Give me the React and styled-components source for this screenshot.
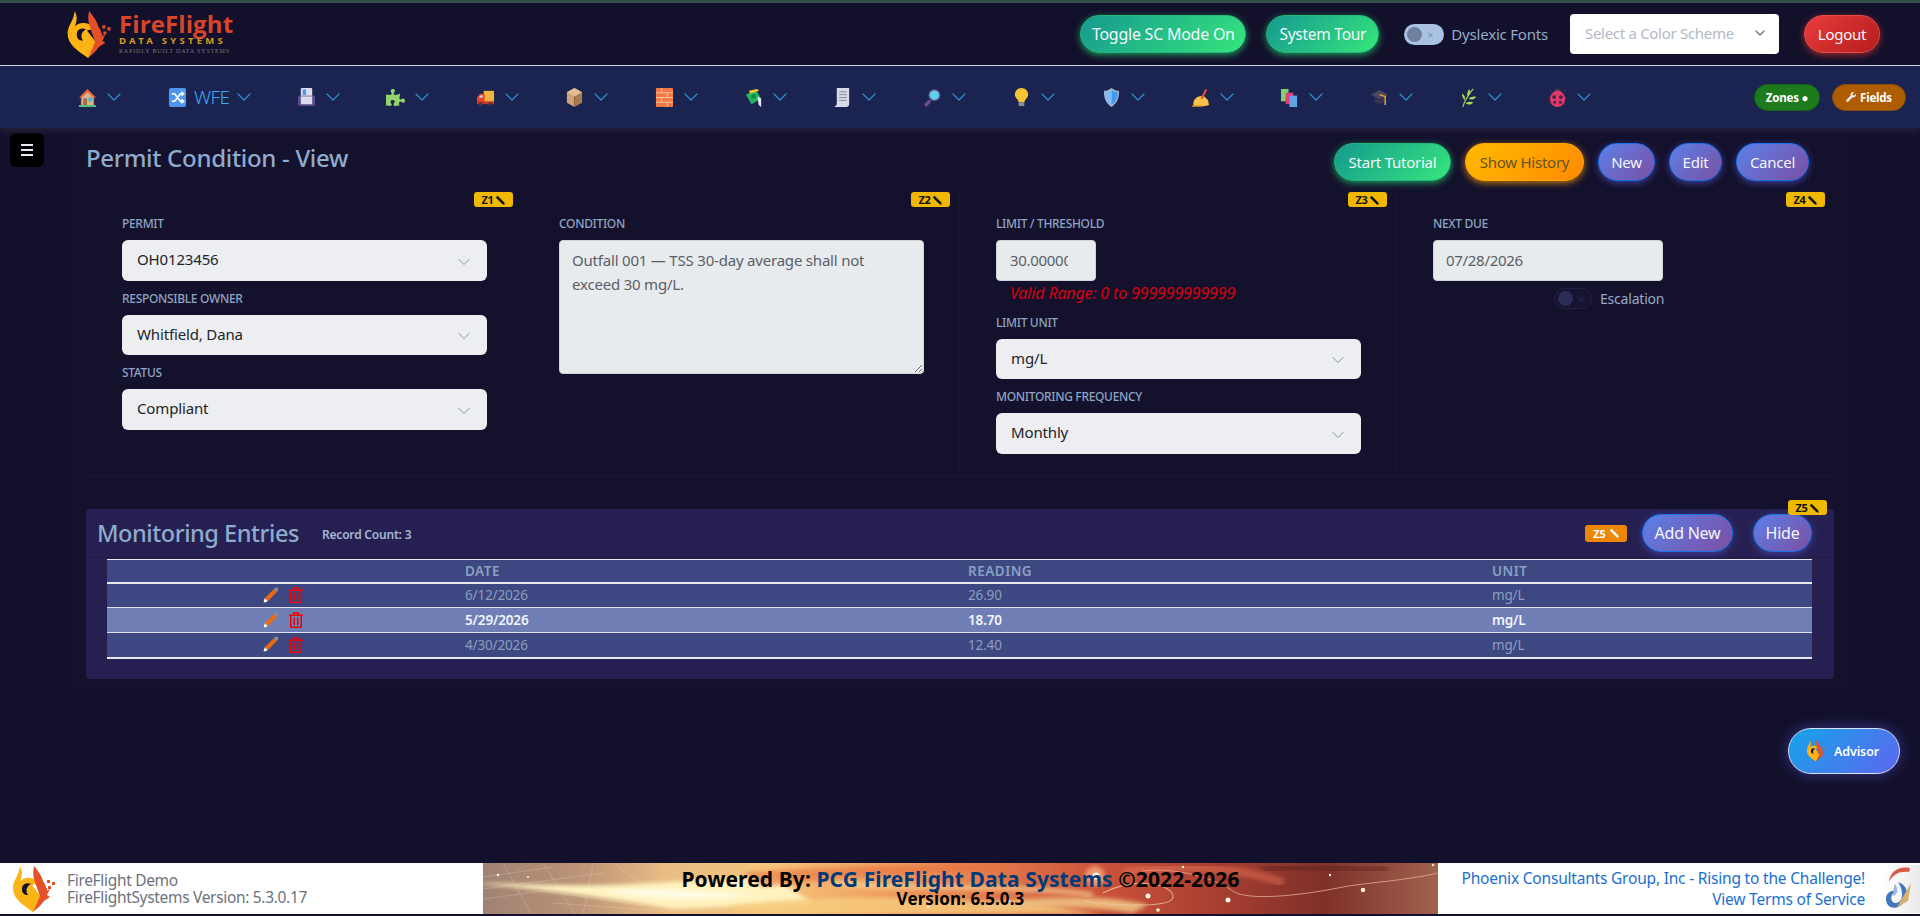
import React from 'react';
import styled, { createGlobalStyle } from 'styled-components';
import { ChevronDown } from 'lucide-react';
import { FaPuzzlePiece, FaRegTrashAlt, FaWrench } from 'react-icons/fa';

const GlobalStyle = createGlobalStyle`
	html, body { margin: 0; padding: 0; height: 100%; background: #13102b; overflow: hidden; }
	body { font-family: "Noto Sans", "Open Sans", sans-serif; font-size: 14px; }
	#root { height: 916px; }
	* { box-sizing: border-box; }
`;

const Page = styled.div`
	height: 916px;
	display: flex;
	flex-direction: column;
	background: #13102b;
	border-top: 3px solid #32504c;
	position: relative;
	overflow: hidden;
`;

/* header */
const Header = styled.header`
	height: 63px;
	flex: none;
	display: flex;
	align-items: center;
	padding: 0 40px 0 63px;
	border-bottom: 1px solid #d8dce6;
	background: #13102b;
`;
const LogoBlock = styled.div`
	display: flex;
	align-items: center;
	gap: 8px;
	margin-right: auto;
`;
const LogoText = styled.div`
	display: flex;
	flex-direction: column;
	width: 116px;
`;
const LogoName = styled.span`
	font: 700 24px/23px "Open Sans", sans-serif;
	color: #d8452a;
	letter-spacing: 0.1px;
`;
const LogoSub = styled.span`
	font: 700 9.5px/12px "Noto Sans", sans-serif;
	color: #d39a1d;
	letter-spacing: 3.25px;
	white-space: nowrap;
`;
const LogoTag = styled.span`
	font: 400 6px/9px "Liberation Serif", serif;
	color: #77757f;
	letter-spacing: 0.85px;
	white-space: nowrap;
`;
const HeaderActions = styled.div`
	display: flex;
	align-items: center;
`;
const gradients = {
	green: 'linear-gradient(135deg, #15998f, #36e67c)',
	orange: 'linear-gradient(135deg, #ffbb00, #ff8a00)',
	purple: 'linear-gradient(135deg, #5b80e8, #7c4fa3)',
	red: 'linear-gradient(135deg, #ea3c3c, #b31d1d)',
};
const glow = {
	green: '#1d9a5a',
	orange: '#b97a10',
	purple: '#3f3f9a',
	red: '#9c2a2a',
};
const edge = {
	green: '#22b57a',
	orange: '#ffa600',
	purple: '#1673ea',
	red: '#e74a4a',
};
const Pill = styled.button`
	height: 38px;
	width: ${p => p.$w}px;
	margin-left: ${p => p.$ml || 0}px;
	padding: 0;
	flex: none;
	border-radius: 19px;
	border: 1px solid ${p => edge[p.$kind]};
	background: ${p => gradients[p.$kind]};
	box-shadow: 0 2px 7px ${p => glow[p.$kind]};
	color: ${p => (p.$kind === 'orange' ? '#6a5320' : '#f3f6fb')};
	font: 400 ${p => p.$fs || 15}px/20px "Noto Sans", sans-serif;
	letter-spacing: -0.25px;
	white-space: nowrap;
`;
const ToggleTrack = styled.span`
	width: ${p => p.$w}px;
	height: 21px;
	margin-left: ${p => p.$ml || 0}px;
	flex: none;
	border-radius: 11px;
	display: flex;
	align-items: center;
	padding-left: 3px;
	background: ${p => (p.$dark ? '#171431' : '#a9c1e3')};
	border: ${p => (p.$dark ? '1px solid #232044' : 'none')};
	color: ${p => (p.$dark ? '#2c2a52' : '#7f90ad')};
	font-size: 11px;
`;
const ToggleKnob = styled.span`
	width: 15px;
	height: 15px;
	border-radius: 50%;
	margin-right: 5px;
	background: ${p => (p.$dark ? '#2b2c57' : '#6f7f9e')};
`;
const ToggleLabel = styled.span`
	margin-left: ${p => p.$ml}px;
	color: #96a9c5;
	font-size: ${p => p.$fs || 14}px;
	letter-spacing: -0.2px;
	white-space: nowrap;
`;
const SchemeSelect = styled.div`
	width: 209px;
	height: 40px;
	margin-left: 22px;
	background: #fff;
	border-radius: 4px;
	display: flex;
	align-items: center;
	padding: 0 11px 3px 15px;
	justify-content: space-between;
	color: #b3b9c4;
	font-size: 15px;
	letter-spacing: -0.3px;
	white-space: nowrap;
`;

/* nav */
const Nav = styled.nav`
	height: 62px;
	flex: none;
	display: flex;
	align-items: center;
	padding: 0 14px 0 78px;
	background: #1b2350;
	box-shadow: 0 3px 6px rgba(70, 70, 90, 0.35);
	position: relative;
	z-index: 2;
`;
const NavItem = styled.div`
	width: ${p => p.$w}px;
	flex: none;
	display: flex;
	align-items: center;
	color: #39a9ee;
	font-size: 19px;
	svg.glyph { flex: none; width: 19px; height: 19px; }
	svg.chev { flex: none; margin-left: 5px; color: #2f8fd0; }
`;
const NavLabel = styled.span`
	margin-left: 7px;
	margin-right: -2px;
	letter-spacing: -0.6px;
	font-weight: 300;
`;
const NavPills = styled.div`
	margin-left: auto;
	display: flex;
	gap: 12px;
`;
const NavPill = styled.span`
	height: 27px;
	width: ${p => p.$w}px;
	border-radius: 14px;
	display: flex;
	align-items: center;
	justify-content: center;
	gap: 4px;
	background: ${p => p.$bg};
	border: 1px solid ${p => p.$line};
	color: #fff;
	font: 700 11.5px "Noto Sans", sans-serif;
	letter-spacing: -0.2px;
`;

/* main */
const Main = styled.main`
	flex: 1;
	min-height: 0;
	padding: 9px 75px 0;
`;
const MenuButton = styled.div`
	position: absolute;
	left: 10px;
	top: 130px;
	width: 34px;
	height: 34px;
	background: #000;
	border-radius: 6px;
	display: flex;
	flex-direction: column;
	align-items: center;
	justify-content: center;
	gap: 3px;
	span { display: block; width: 12px; height: 2px; background: #e6e9f2; }
`;
const Card = styled.section`
	height: 551px;
	padding: 0 11px;
	background: #14112d;
	border-radius: 4px;
	box-shadow: 0 0 3px rgba(40, 36, 80, 0.6);
`;
const TitleRow = styled.div`
	height: 50px;
	display: flex;
	align-items: flex-start;
	padding: 6px 25px 0 0;
`;
const PageTitle = styled.h1`
	margin: 0 auto 0 0;
	font: 500 24px/30px "Noto Sans", sans-serif;
	letter-spacing: -0.3px;
	color: #8fabcd;
	white-space: nowrap;
`;
const Zones = styled.div`
	height: 289px;
	display: grid;
	grid-template-columns: repeat(4, 1fr);
	border-radius: 4px;
	box-shadow: 0 1px 0 #1a1737;
`;
const Zone = styled.div`
	position: relative;
	padding: 29px 35px 0 36px;
	border-right: ${p => (p.$last ? 'none' : '1px solid #19163a')};
`;
const ZoneBadge = styled.span`
	position: absolute;
	right: ${p => p.$r ?? 9}px;
	top: ${p => p.$t ?? 5}px;
	width: 39px;
	height: 15px;
	display: flex;
	align-items: center;
	justify-content: center;
	gap: 2px;
	background: #f0b800;
	border-radius: 3px;
	color: #111;
	font: 700 11px/15px "Noto Sans", sans-serif;
	letter-spacing: -0.4px;
`;
const Field = styled.div`
	margin-bottom: 10px;
`;
const FieldLabel = styled.label`
	display: block;
	height: 16px;
	margin-bottom: 8px;
	font: 500 12px/16px "Noto Sans", sans-serif;
	letter-spacing: -0.32px;
	color: #8fa3c2;
	text-transform: uppercase;
	white-space: nowrap;
`;
const SelectBox = styled.div`
	height: 40.5px;
	background: #eceef2;
	border-radius: 6px;
	display: flex;
	align-items: center;
	justify-content: space-between;
	padding: 0 13px 2px 15px;
	color: #212529;
	font-size: 15px;
	letter-spacing: -0.15px;
	svg { color: #7d8796; margin-top: 5px; }
`;
const TextArea = styled.textarea`
	display: block;
	width: 100%;
	height: 134px;
	padding: 7px 12px;
	border: 1px solid #cfd4da;
	border-radius: 4px;
	background: #e8ebee;
	color: #596067;
	font: 400 15px/24px "Noto Sans", sans-serif;
	letter-spacing: -0.2px;
	outline: none;
`;
const TextInput = styled.input`
	display: block;
	width: ${p => p.$w}px;
	height: 41px;
	padding: ${p => p.$pad};
	border: 1px solid #cfd4da;
	border-radius: 4px;
	background: #e8ebee;
	color: #596067;
	font: 400 15px "Noto Sans", sans-serif;
	letter-spacing: -0.3px;
	outline: none;
`;
const RangeNote = styled.div`
	height: 20px;
	margin: 2px 0 11.5px 14px;
	color: #d8000c;
	font: italic 400 16px/20px "Noto Sans", sans-serif;
	letter-spacing: -0.15px;
	white-space: nowrap;
`;
const ToggleRow = styled.div`
	display: flex;
	align-items: center;
	margin: 7px 0 0 121px;
`;

const Entries = styled.section`
	height: 170px;
	margin-top: 33px;
	background: #262052;
	border-radius: 4px;
	position: relative;
`;
const EntriesHead = styled.div`
	height: 49px;
	display: flex;
	align-items: center;
	padding: 0 22px 0 11px;
	border-bottom: 1px solid #1f1a47;
`;
const EntriesTitle = styled.h2`
	margin: 0;
	font: 500 23.5px/30px "Noto Sans", sans-serif;
	letter-spacing: -0.45px;
	color: #8fabcd;
	white-space: nowrap;
`;
const RecordCount = styled.span`
	margin: 2px auto 0 23px;
	color: #a5b6d2;
	font: 600 12px "Noto Sans", sans-serif;
	letter-spacing: -0.2px;
`;
const InlineBadge = styled.span`
	width: 42px;
	height: 17px;
	margin-right: 15px;
	display: flex;
	align-items: center;
	justify-content: center;
	gap: 3px;
	background: #ee8606;
	border-radius: 3px;
	color: #fff;
	font: 700 11px "Noto Sans", sans-serif;
`;
const Table = styled.table`
	width: 1705px;
	margin: 1px 0 0 21px;
	border-collapse: collapse;
	table-layout: fixed;
	background: #3d4883;
	border-top: 1px solid #e6e8ee;
	border-bottom: 2px solid #e6e8ee;
`;
const HeadCell = styled.th`
	height: 23px;
	padding: 0;
	text-align: left;
	color: #8ba0c2;
	font: 600 13.5px "Noto Sans", sans-serif;
	letter-spacing: 0.5px;
	border-bottom: 2px solid #e6e8ee;
`;
const Row = styled.tr`
	background: ${p => (p.$active ? '#6f7fb5' : '#3d4883')};
	color: ${p => (p.$active ? '#f2f5fc' : '#8c9dbd')};
	font-weight: ${p => (p.$active ? 600 : 400)};
	&:not(:last-child) td { border-bottom: 1px solid #dfe2ea; }
`;
const Cell = styled.td`
	height: 25px;
	padding: 0;
	font-size: 13.5px;
	letter-spacing: -0.15px;
`;
const RowIcons = styled.div`
	display: flex;
	align-items: center;
	gap: 9px;
	padding-left: 155px;
	color: #f00000;
`;
const AdvisorButton = styled.button`
	position: absolute;
	left: 1788px;
	top: 725px;
	width: 112px;
	height: 46px;
	display: flex;
	align-items: center;
	justify-content: center;
	gap: 8px;
	border: 1px solid #d7def5;
	border-radius: 23px;
	background: linear-gradient(135deg, #14a4e8, #5f66f0);
	box-shadow: 0 0 14px rgba(84, 88, 220, 0.55);
	color: #fff;
	font: 600 12.5px "Noto Sans", sans-serif;
	letter-spacing: -0.1px;
	padding: 0 4px 0 0;
`;

/* footer */
const Footer = styled.footer`
	height: 51px;
	flex: none;
	margin-bottom: 2px;
	display: flex;
	align-items: center;
	background: #fff;
`;
const FooterLeft = styled.div`
	width: 483px;
	flex: none;
	display: flex;
	align-items: center;
	padding-left: 8px;
`;
const FooterApp = styled.div`
	margin-left: 11px;
	color: #6b737c;
	font-size: 15.5px;
	line-height: 17px;
	letter-spacing: -0.32px;
	white-space: nowrap;
`;
const Banner = styled.div`
	width: 955px;
	height: 100%;
	flex: none;
	position: relative;
	display: flex;
	flex-direction: column;
	align-items: center;
	padding: 3px 0 0 0;
	overflow: hidden;
	> svg { position: absolute; left: 0; top: 0; }
`;
const PoweredBy = styled.div`
	position: relative;
	color: #000;
	font: 700 21px/26px "Noto Sans", sans-serif;
	letter-spacing: 0.1px;
	white-space: nowrap;
	span { color: #003b78; }
`;
const BannerVersion = styled.div`
	position: relative;
	margin-top: -3px;
	color: #000;
	font: 700 17px/20px "Noto Sans", sans-serif;
	letter-spacing: 0.1px;
`;
const FooterRight = styled.div`
	flex: 1;
	display: flex;
	align-items: center;
	justify-content: flex-end;
`;
const FooterLinks = styled.div`
	display: flex;
	flex-direction: column;
	align-items: flex-end;
	color: #1a6fd0;
	font-size: 15.5px;
	line-height: 21px;
	letter-spacing: -0.2px;
	white-space: nowrap;
`;
const SwirlBox = styled.div`
	width: 36px;
	margin-left: 19px;
	display: flex;
	background: linear-gradient(90deg, #fff 0%, #e9e9e9 100%);
`;

/* drawings */
const Phoenix = ({ w, h }) => (
	<svg width={w} height={h} viewBox="0 0 46 48">
		<path d="M24 47 C14 40 4 34 4 23 C4 15 10 11 11 1 C14 7 13 12 11 16 C14 13 18 12 22 13 C26 13 28 17 29 21 C27 19 25 19 23 20 C26 24 30 29 32 32 C30 37 27 43 24 47Z" fill="#fbb316" />
		<path d="M13 24 C13 19 18 17 22 19 C18 21 16 25 19 30 C15 30 13 28 13 24Z" fill="#13102b" />
		<path d="M24 47 C27 41 29 36 31 31 C29 26 27 20 25 14 C24 9 24 6 25 1 C29 6 33 11 34 16 C36 19 38 22 37 26 L41 24 L38 30 L41 32 L35 36 C32 40 28 44 24 47Z" fill="#e5502a" />
		<path d="M38 15h3v3h-3zM43 17h3v3h-3zM39 21h3v3h-3zM35 23h3v3h-3z" fill="#e5502a" />
	</svg>
);
const Swirl = () => (
	<svg width="28" height="48" viewBox="0 0 28 48">
		<path d="M26 3 C14 1 6 7 5 17 C9 9 16 6 25 7Z" fill="#d55a4a" />
		<path d="M14 17 C24 20 25 30 20 37 C14 46 2 44 2 34 C2 27 9 24 14 27 C8 27 6 32 8 36 C12 41 19 36 18 29 C18 24 16 20 14 17Z" fill="#3f78bd" />
		<path d="M27 18 L24 36 L13 42 L20 30Z" fill="#d8b070" />
		<path d="M11 19 C15 24 13 30 9 31 C10 27 9 22 11 19Z" fill="#9bb9dc" />
	</svg>
);
const sparks = [[700, 4, 1.2], [613, 13, 3.5], [665, 33, 2.5], [745, 37, 2.5], [847, 12, 1.2], [880, 27, 2.2], [675, 47, 1.8], [525, 38, 2], [445, 44, 1.2], [15, 12, 1.2], [45, 14, 1], [950, 2, 1.2]];
const BannerArt = () => (
	<svg width="955" height="51" viewBox="0 0 955 51" preserveAspectRatio="none">
		<defs>
			<linearGradient id="bannerBase" x1="0" x2="1" y1="0" y2="0">
				<stop offset="0" stopColor="#a08273" />
				<stop offset="0.1" stopColor="#bb9377" />
				<stop offset="0.19" stopColor="#e8bc84" />
				<stop offset="0.3" stopColor="#f6c67c" />
				<stop offset="0.42" stopColor="#ef9f60" />
				<stop offset="0.54" stopColor="#e2774a" />
				<stop offset="0.65" stopColor="#c9523a" />
				<stop offset="0.76" stopColor="#ab4032" />
				<stop offset="0.88" stopColor="#7f3029" />
				<stop offset="1" stopColor="#a0624f" />
			</linearGradient>
			<filter id="soft"><feGaussianBlur stdDeviation="2.2" /></filter>
		</defs>
		<rect width="955" height="51" fill="url(#bannerBase)" />
		<g stroke="#e9dccb" strokeWidth="0.7" opacity="0.4" fill="none">
			<path d="M0 14 L70 4 M0 36 L60 28 L160 42 M20 0 L48 51 M60 0 L92 51 M110 2 L100 51 M0 26 L120 10 M130 0 L160 22 M70 40 L180 48" />
		</g>
		<path d="M0 20 C60 22 110 24 170 20 L290 14 L330 40 L190 46 C130 36 70 28 0 21Z" fill="#fff3c0" filter="url(#soft)" />
		<path d="M120 28 C170 24 220 28 270 32 C220 38 170 36 120 29Z" fill="#fffbe6" filter="url(#soft)" />
		<path d="M260 10 C340 2 430 4 520 0 L520 6 C430 12 350 14 280 24Z" fill="#e8703e" opacity="0.6" filter="url(#soft)" />
		<path d="M240 44 C330 30 440 34 560 42 L620 51 H300Z" fill="#f7cd7e" opacity="0.8" filter="url(#soft)" />
		<path d="M350 20 C430 28 520 20 610 32" stroke="#f9d598" strokeWidth="5" fill="none" opacity="0.7" filter="url(#soft)" />
		<path d="M500 40 C560 34 620 30 665 42 L650 50 C600 42 550 44 500 46Z" fill="#f0c683" opacity="0.85" filter="url(#soft)" />
		<path d="M660 8 C690 4 730 14 750 28 C760 36 800 36 860 24 C880 20 920 18 955 10" stroke="#e9b49b" strokeWidth="1" fill="none" opacity="0.75" />
		<path d="M620 30 C650 14 690 20 690 34 C690 44 640 44 600 38" stroke="#f0c7a6" strokeWidth="1.1" fill="none" opacity="0.75" />
		<path d="M780 6 C830 0 870 10 905 6" stroke="#5c231f" strokeWidth="8" fill="none" opacity="0.5" filter="url(#soft)" />
		<path d="M640 10 C680 0 760 4 800 20" stroke="#ef7a5a" strokeWidth="8" fill="none" opacity="0.45" filter="url(#soft)" />
		<circle cx="612" cy="13" r="10" fill="#ffb48a" opacity="0.7" filter="url(#soft)" />
		{sparks.map(([x, y, r]) => <circle key={x} cx={x} cy={y} r={r} fill="#fff6e4" />)}
	</svg>
);
const ZonePencil = ({ color = '#111', s = 10 }) => (
	<svg width={s} height={s} viewBox="0 0 10 10">
		<path d="M.8 2.6 L2.6 .8 L9.3 7.5 L9.7 9.7 L7.5 9.3Z" fill={color} />
	</svg>
);
const EditPencil = () => (
	<svg width="17" height="17" viewBox="0 0 16 16">
		<path d="M2.6 10.6 L11.3 1.9 L14 4.6 L5.4 13.4Z" fill="#ea6a12" />
		<path d="M11.3 1.9 L12.7 .8 C13.3 .4 14 .5 14.6 1 C15.3 1.7 15.4 2.5 15 3.3 L14 4.6Z" fill="#8d9291" />
		<path d="M2.6 10.6 L5.4 13.4 L1.2 15Z" fill="#fff" />
		<path d="M1.6 13.9 L2.3 14.6 L1 15.2Z" fill="#1b2350" />
	</svg>
);

const Glyph = ({ children }) => (
	<svg className="glyph" viewBox="0 0 20 20">{children}</svg>
);
const icons = {
	home: <Glyph><path d="M10 1 L19 10 H17 V18 H3 V10 H1Z" fill="#e4683d" /><path d="M4 10 L10 4.5 L16 10 V18 H4Z" fill="#d9b48c" /><rect x="11" y="10" width="4" height="4" fill="#3fb4e8" /><rect x="5.5" y="11" width="4" height="7" fill="#a86a43" /><rect x="1" y="18" width="18" height="2" fill="#58c77a" /></Glyph>,
	shuffle: <Glyph><rect x="1" y="0" width="18" height="20" rx="2" fill="#4f97ee" /><path d="M4 6 H7 L13 14 H16 M4 14 H7 L13 6 H16 M14 4 L16.5 6 L14 8 M14 12 L16.5 14 L14 16" stroke="#fff" strokeWidth="1.6" fill="none" /></Glyph>,
	cabinet: <Glyph><rect x="1" y="8" width="18" height="11" rx="2" fill="#5b4a8c" /><rect x="4" y="0" width="12" height="17" rx="1" fill="#dcdcf0" /><rect x="6" y="1.5" width="3.5" height="6" fill="#4f97ee" /><rect x="4" y="8" width="12" height="1" fill="#7f7fa8" /></Glyph>,
	truck: <Glyph><rect x="8" y="3" width="11" height="12" fill="#f0b53c" /><path d="M1 16 V10 L4 6 H9 V16Z" fill="#e8432f" /><path d="M3 10 L5 7.5 H7 V10Z" fill="#bfe7f5" /><rect x="1" y="14" width="18" height="3" fill="#c9342a" /><circle cx="5" cy="17" r="2" fill="#3a3a44" /><circle cx="15" cy="17" r="2" fill="#3a3a44" /></Glyph>,
	box: <Glyph><path d="M10 0 L18 4.5 V15.5 L10 20Z" fill="#a97a52" /><path d="M10 0 L2 4.5 V15.5 L10 20Z" fill="#cfa27a" /><path d="M2 4.5 L10 9 L18 4.5 L10 0Z" fill="#e2bd96" /><path d="M10 9 V20" stroke="#8c6240" /></Glyph>,
	brick: <Glyph><rect x="1" y="0" width="18" height="20" rx="1" fill="#ef7a44" /><path d="M1 5 H19 M1 10 H19 M1 15 H19 M7 0 V5 M13 5 V10 M7 10 V15 M13 15 V20" stroke="#f7c4a8" strokeWidth="1" /></Glyph>,
	money: <Glyph><path d="M2 7 L12 1 L18 11 L8 17Z" fill="#22b45a" /><circle cx="10" cy="9" r="2.4" fill="#138a41" /><path d="M5 3 L14 1 L16 3 L7 6Z" fill="#f2c230" /><path d="M14 9 L18 11 L18 20 L15.5 18Z" fill="#e8e8f0" /></Glyph>,
	scroll: <Glyph><path d="M4 0 H17 V17 C17 19 15 20 13 20 H1 C3 19 4 18 4 16Z" fill="#d9d9e8" /><path d="M6.5 4 H14.5 M6.5 7 H14.5 M6.5 10 H14.5 M6.5 13 H14.5" stroke="#8a8aa0" strokeWidth="1" /></Glyph>,
	magnifier: <Glyph><rect x="1" y="14" width="8" height="3.6" rx="1.6" transform="rotate(-45 5 16)" fill="#6f4a8c" /><circle cx="12" cy="7.5" r="6.5" fill="#5d4a82" /><circle cx="12" cy="7.5" r="5" fill="#5fd0ec" /></Glyph>,
	bulb: <Glyph><path d="M10 0 C14 0 17 3 17 7 C17 10 14 11 13 15 H7 C6 11 3 10 3 7 C3 3 6 0 10 0Z" fill="#f7c436" /><rect x="7" y="15" width="6" height="4" rx="1" fill="#8d8da0" /></Glyph>,
	shield: <Glyph><path d="M10 0 C13 2 15 3 18 3 C18 11 16 16 10 20 C4 16 2 11 2 3 C5 3 7 2 10 0Z" fill="#a8b4c8" /><path d="M10 2 C12.5 3.5 14 4.2 16.5 4.4 C16.5 11 14.5 15 10 18Z" fill="#3f9cf2" /><path d="M10 2 C7.5 3.5 6 4.2 3.5 4.4 C3.5 11 5.5 15 10 18Z" fill="#7fbcf5" /></Glyph>,
	write: <Glyph><path d="M3 19 C1 14 5 10 8 9 L13 8 L18 13 L19 18 L15 19Z" fill="#f8c24a" /><path d="M10 11 L15 1 L17 2 L12 12Z" fill="#e2503c" /><path d="M1 19 H13" stroke="#e89020" strokeWidth="1.5" /></Glyph>,
	books: <Glyph><rect x="1" y="1" width="8" height="13" fill="#7fd06e" /><rect x="6" y="5" width="8" height="12" fill="#e23d78" /><rect x="10" y="8" width="8" height="12" fill="#5fa4e8" /></Glyph>,
	cap: <Glyph><path d="M10 2 L19 7 L10 12 L1 7Z" fill="#4a4660" /><path d="M5 10 V15 C7 17 13 17 15 15 V10 L10 13Z" fill="#3a3650" /><path d="M10 7 L16 9 V18" stroke="#ee9a2e" strokeWidth="1.6" fill="none" /></Glyph>,
	leaf: <Glyph><path d="M4 20 C6 13 10 7 15 1" stroke="#9bd24e" strokeWidth="1.3" fill="none" /><path d="M9 9 C8 6 9 3 11 1 C12 4 12 7 9 9Z M6 13 C4 11 3 8 3 6 C6 7 7 10 6 13Z M10 11 C13 9 16 9 18 9 C17 12 13 13 10 11Z M7 16 C10 14 13 14 15 15 C13 18 10 18 7 16Z" fill="#a5d84f" /></Glyph>,
	bug: <Glyph><path d="M4 4 L1 1 M16 4 L19 1 M2 10 H0 M18 10 H20 M3 16 L1 18 M17 16 L19 18" stroke="#4a3a50" strokeWidth="1" /><circle cx="10" cy="4" r="3.5" fill="#4a3a50" /><ellipse cx="10" cy="11.5" rx="8" ry="8.5" fill="#e0386a" /><circle cx="6.5" cy="9.5" r="2" fill="#3a2a40" /><circle cx="13.5" cy="9.5" r="2" fill="#3a2a40" /><circle cx="7" cy="15" r="1.6" fill="#3a2a40" /><circle cx="13" cy="15" r="1.6" fill="#3a2a40" /></Glyph>,
};
const navIcons = ['cabinet', 'puzzle', 'truck', 'box', 'brick', 'money', 'scroll', 'magnifier', 'bulb', 'shield', 'write', 'books', 'cap', 'leaf', 'bug'];

const entries = [
	{ date: '6/12/2026', reading: '26.90', unit: 'mg/L' },
	{ date: '5/29/2026', reading: '18.70', unit: 'mg/L', active: true },
	{ date: '4/30/2026', reading: '12.40', unit: 'mg/L' },
];

const Select = ({ label, value }) => (
	<Field>
		<FieldLabel>{label}</FieldLabel>
		<SelectBox>{value}<ChevronDown size={20} strokeWidth={1.1} /></SelectBox>
	</Field>
);
const Badge = ({ children, ...rest }) => (
	<ZoneBadge {...rest}>{children}<ZonePencil /></ZoneBadge>
);

export default function App() {
	return (
		<Page>
			<GlobalStyle />
			<Header>
				<LogoBlock>
					<Phoenix w={48} h={49} />
					<LogoText>
						<LogoName>FireFlight</LogoName>
						<LogoSub>DATA SYSTEMS</LogoSub>
						<LogoTag>RAPIDLY BUILT DATA SYSTEMS</LogoTag>
					</LogoText>
				</LogoBlock>
				<HeaderActions>
					<Pill $kind="green" $w={166} $fs={16}>Toggle SC Mode On</Pill>
					<Pill $kind="green" $w={113} $ml={20} $fs={15.5}>System Tour</Pill>
					<ToggleTrack $w={40} $ml={25}><ToggleKnob />×</ToggleTrack>
					<ToggleLabel $ml={7} $fs={15}>Dyslexic Fonts</ToggleLabel>
					<SchemeSelect>Select a Color Scheme<ChevronDown size={16} color="#6c757d" /></SchemeSelect>
					<Pill $kind="red" $w={76} $ml={25}>Logout</Pill>
				</HeaderActions>
			</Header>
			<Nav>
				<NavItem $w={90}>{icons.home}<ChevronDown className="chev" size={24} strokeWidth={1.2} /></NavItem>
				<NavItem $w={129}>{icons.shuffle}<NavLabel>WFE</NavLabel><ChevronDown className="chev" size={24} strokeWidth={1.2} /></NavItem>
				{navIcons.map(name => (
					<NavItem key={name} $w={89.4}>
						{name === 'puzzle' ? <FaPuzzlePiece className="glyph" color="#93d36c" /> : icons[name]}
						<ChevronDown className="chev" size={24} strokeWidth={1.2} />
					</NavItem>
				))}
				<NavPills>
					<NavPill $w={66} $bg="#1d7a1d" $line="#166316">Zones ●</NavPill>
					<NavPill $w={74} $bg="#ad5c00" $line="#8a4c0c"><FaWrench size={10} color="#e8e8e8" /> Fields</NavPill>
				</NavPills>
			</Nav>
			<MenuButton><span /><span /><span /></MenuButton>
			<Main>
				<Card>
					<TitleRow>
						<PageTitle>Permit Condition - View</PageTitle>
						<Pill $kind="green" $w={117}>Start Tutorial</Pill>
						<Pill $kind="orange" $w={119} $ml={14}>Show History</Pill>
						<Pill $kind="purple" $w={57} $ml={14}>New</Pill>
						<Pill $kind="purple" $w={53} $ml={14}>Edit</Pill>
						<Pill $kind="purple" $w={73} $ml={14}>Cancel</Pill>
					</TitleRow>
					<Zones>
						<Zone>
							<Badge>Z1</Badge>
							<Select label="Permit" value="OH0123456" />
							<Select label="Responsible Owner" value="Whitfield, Dana" />
							<Select label="Status" value="Compliant" />
						</Zone>
						<Zone>
							<Badge>Z2</Badge>
							<Field>
								<FieldLabel>Condition</FieldLabel>
								<TextArea readOnly value="Outfall 001 — TSS 30-day average shall not exceed 30 mg/L." />
							</Field>
						</Zone>
						<Zone>
							<Badge>Z3</Badge>
							<FieldLabel>Limit / Threshold</FieldLabel>
							<TextInput readOnly $w={100} $pad="0 27px 1px 13px" value="30.000000" />
							<RangeNote>Valid Range: 0 to 999999999999</RangeNote>
							<Select label="Limit Unit" value="mg/L" />
							<Select label="Monitoring Frequency" value="Monthly" />
						</Zone>
						<Zone $last>
							<Badge>Z4</Badge>
							<FieldLabel>Next Due</FieldLabel>
							<TextInput readOnly $w={230} $pad="0 12px 2px" value="07/28/2026" />
							<ToggleRow>
								<ToggleTrack $w={38} $dark><ToggleKnob $dark />×</ToggleTrack>
								<ToggleLabel $ml={8}>Escalation</ToggleLabel>
							</ToggleRow>
						</Zone>
					</Zones>
					<Entries>
						<EntriesHead>
							<EntriesTitle>Monitoring Entries</EntriesTitle>
							<RecordCount>Record Count: 3</RecordCount>
							<InlineBadge>Z5<ZonePencil color="#fff" s={10} /></InlineBadge>
							<Pill $kind="purple" $w={91} $fs={16}>Add New</Pill>
							<Pill $kind="purple" $w={59} $ml={20} $fs={16}>Hide</Pill>
						</EntriesHead>
						<Badge $r={7} $t={-9}>Z5</Badge>
						<Table>
							<colgroup>
								<col style={{ width: 358 }} />
								<col style={{ width: 503 }} />
								<col style={{ width: 524 }} />
								<col />
							</colgroup>
							<thead>
								<tr>
									<HeadCell />
									<HeadCell>DATE</HeadCell>
									<HeadCell>READING</HeadCell>
									<HeadCell>UNIT</HeadCell>
								</tr>
							</thead>
							<tbody>
								{entries.map(row => (
									<Row key={row.date} $active={row.active}>
										<Cell><RowIcons><EditPencil /><FaRegTrashAlt size={16} /></RowIcons></Cell>
										<Cell>{row.date}</Cell>
										<Cell>{row.reading}</Cell>
										<Cell>{row.unit}</Cell>
									</Row>
								))}
							</tbody>
						</Table>
					</Entries>
				</Card>
			</Main>
			<AdvisorButton><Phoenix w={21} h={22} />Advisor</AdvisorButton>
			<Footer>
				<FooterLeft>
					<Phoenix w={48} h={48} />
					<FooterApp>FireFlight Demo<br />FireFlightSystems Version: 5.3.0.17</FooterApp>
				</FooterLeft>
				<Banner>
					<BannerArt />
					<PoweredBy>Powered By: <span>PCG FireFlight Data Systems</span> ©2022-2026</PoweredBy>
					<BannerVersion>Version: 6.5.0.3</BannerVersion>
				</Banner>
				<FooterRight>
					<FooterLinks>
						<span>Phoenix Consultants Group, Inc - Rising to the Challenge!</span>
						<span>View Terms of Service</span>
					</FooterLinks>
					<SwirlBox><Swirl /></SwirlBox>
				</FooterRight>
			</Footer>
		</Page>
	);
}
